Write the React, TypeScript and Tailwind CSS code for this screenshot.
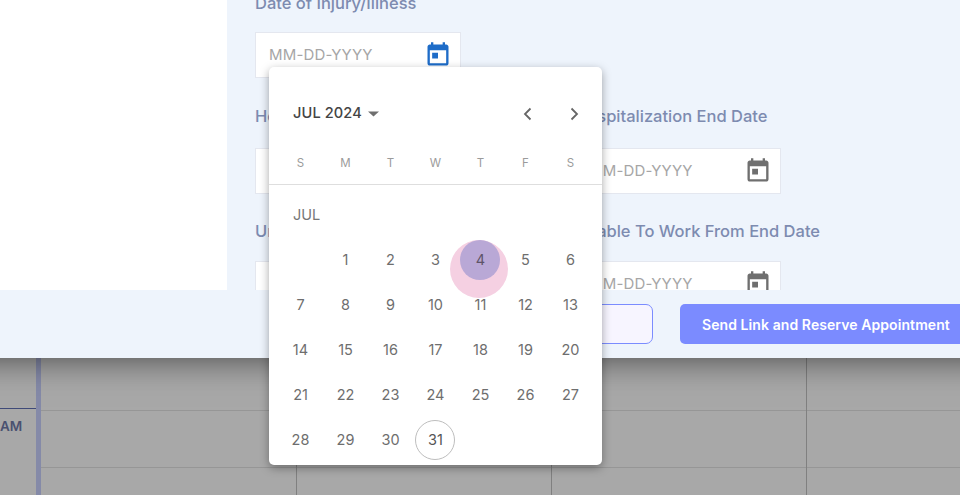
const FONT = "font-['Inter','Noto_Sans',sans-serif]";

function CalIcon({ className }: { className: string }) {
  return (
    <svg viewBox="0 0 24 24" width="28" height="28" fill="currentColor" className={className}>
      <path d="M19 3h-1V1h-2v2H8V1H6v2H5c-1.11 0-1.99.9-1.99 2L3 19c0 1.1.89 2 2 2h14c1.1 0 2-.9 2-2V5c0-1.1-.9-2-2-2zm0 16H5V8h14v11zM7 10h5v5H7z" />
    </svg>
  );
}

function DateInput({ active }: { active?: boolean }) {
  return (
    <div className="w-[206px] h-[46px] shrink-0 bg-white border border-[#e4e7ef] flex items-center justify-between pl-[13px] pr-[8px]">
      <span className="text-[15px] text-[#a6a6a6] tracking-[0.15px]">MM-DD-YYYY</span>
      <CalIcon className={active ? "text-[#1e6cc8]" : "text-[#6f6f6f]"} />
    </div>
  );
}

function Label({ children }: { children: React.ReactNode }) {
  return <div className="text-[16.5px] font-medium text-[#7d8bb0] whitespace-nowrap leading-[22px]">{children}</div>;
}

const weeks: (number | null)[][] = [
  [null, 1, 2, 3, 4, 5, 6],
  [7, 8, 9, 10, 11, 12, 13],
  [14, 15, 16, 17, 18, 19, 20],
  [21, 22, 23, 24, 25, 26, 27],
  [28, 29, 30, 31, null, null, null],
];

function Calendar() {
  return (
    <div className="absolute left-[269px] top-[67px] w-[333px] h-[398px] bg-white rounded-[5px] shadow-[0_3px_10px_rgba(0,0,0,0.35)] z-20 overflow-hidden">
      <div className="flex items-center justify-between pl-[24px] pr-[19px] pt-[30px] h-[64px]">
        <div className="flex items-center gap-[6px]">
          <span className="text-[14.6px] font-medium text-[#444] tracking-[0.1px]">JUL 2024</span>
          <svg width="11" height="6" viewBox="0 0 11 6"><path d="M0 0.5h11L5.500 5.500z" fill="#6f6f6f" /></svg>
        </div>
        <div className="flex items-center gap-[28px]">
          <svg width="18" height="18" viewBox="0 0 18 18" fill="none" stroke="#666" strokeWidth="1.8"><path d="M11.500 3.500 6 9l5.500 5.500" /></svg>
          <svg width="18" height="18" viewBox="0 0 18 18" fill="none" stroke="#666" strokeWidth="1.8"><path d="M6.500 3.500 12 9l-5.500 5.500" /></svg>
        </div>
      </div>
      <div className="grid grid-cols-[repeat(7,45px)] px-[9px] h-[54px] items-center border-b border-[#dedede] pt-[13px]">
        {["S", "M", "T", "W", "T", "F", "S"].map((d, i) => (
          <div key={i} className="text-center text-[11.5px] text-[#9b9b9b]">{d}</div>
        ))}
      </div>
      <div className="pl-[24px] pt-[19px] h-[52px] text-[14.5px] text-[#777] leading-[22px]">JUL</div>
      <div className="grid grid-cols-[repeat(7,45px)] auto-rows-[45px] px-[9px]">
        {weeks.flat().map((d, i) => (
          <div key={i} className="flex items-center justify-center relative">
            {d === 31 && <span className="absolute left-[2px] top-[2.500px] w-[40px] h-[40px] rounded-full border border-[#bdbdbd]" />}
            {d === 4 && <span className="absolute left-[-8px] top-[2.500px] w-[58px] h-[58px] rounded-full bg-[#f5d0e2]" />}
            {d === 4 && <span className="absolute left-[2px] top-[2.500px] w-[40px] h-[40px] rounded-full bg-[#b9a8d6]" />}
            {d !== null && (
              <span className={`relative text-[14.5px] ${d === 4 ? "text-[#5e5468]" : d === 31 ? "text-[#555]" : "text-[#6e6e6e]"}`}>{d}</span>
            )}
          </div>
        ))}
      </div>
    </div>
  );
}

function Backdrop() {
  return (
    <div className="relative flex-1 flex bg-[#a8a8a8] overflow-hidden">
      <div className="w-[36px] shrink-0 pt-[50px]">
        <div className="border-t border-[#3f4a78] pt-[8px] text-[13.500px] font-semibold text-[#4a5170] text-right pr-[16px] leading-[18px]">AM</div>
      </div>
      <div className="w-[5px] shrink-0 bg-[#858aa8]" />
      <div className="flex-1 overflow-hidden">
        <div className="h-[53px] border-b border-[#969696]" />
        <div className="h-[57px] border-b border-[#969696]" />
      </div>
      <div className="absolute inset-0 flex pl-[41px]">
        <div className="w-[256px] border-r border-[#808080]" />
        <div className="w-[255px] border-r border-[#808080]" />
        <div className="w-[255px] border-r border-[#808080]" />
      </div>
    </div>
  );
}

export default function App() {
  return (
    <div className={`${FONT} relative w-[960px] h-[495px] overflow-hidden flex flex-col bg-[#a8a8a8]`}>
      <div className="relative z-10 h-[358px] shrink-0 -mx-[40px] px-[40px] bg-[#eef4fc] shadow-[0_4px_30px_rgba(0,0,0,0.5)] flex flex-col">
        <div className="h-[290px] shrink-0 flex overflow-hidden">
          <div className="w-[227px] shrink-0 bg-white" />
          <div className="pl-[28px] flex gap-[114px]">
            <div className="w-[206px] shrink-0">
              <div className="-mt-[8px] h-[40px]"><Label>Date of Injury/Illness</Label></div>
              <DateInput active />
              <div className="mt-[27px] h-[43px]"><Label>Hospitalization Start Date</Label></div>
              <DateInput />
              <div className="mt-[26px] h-[41px]"><Label>Unable To Work From Date</Label></div>
              <DateInput />
            </div>
            <div className="w-[206px] shrink-0 pt-[105px]">
              <div className="h-[43px]"><Label>Hospitalization End Date</Label></div>
              <DateInput />
              <div className="mt-[26px] h-[41px]"><Label>Unable To Work From End Date</Label></div>
              <DateInput />
            </div>
          </div>
        </div>
        <div className="flex-1 flex items-start justify-end pt-[14px] gap-[27px] -mr-[8px]">
          <div className="w-[180px] h-[40px] rounded-[7px] border border-[#7b8cff] bg-[#f7f5ff]" />
          <div className="w-[288px] h-[40px] rounded-[5px] bg-[#7b8bff] flex items-center pl-[22px] text-[14px] tracking-[0.08px] font-semibold text-white whitespace-nowrap">
            Send Link and Reserve Appointment
          </div>
        </div>
      </div>
      <Backdrop />
      <Calendar />
    </div>
  );
}
